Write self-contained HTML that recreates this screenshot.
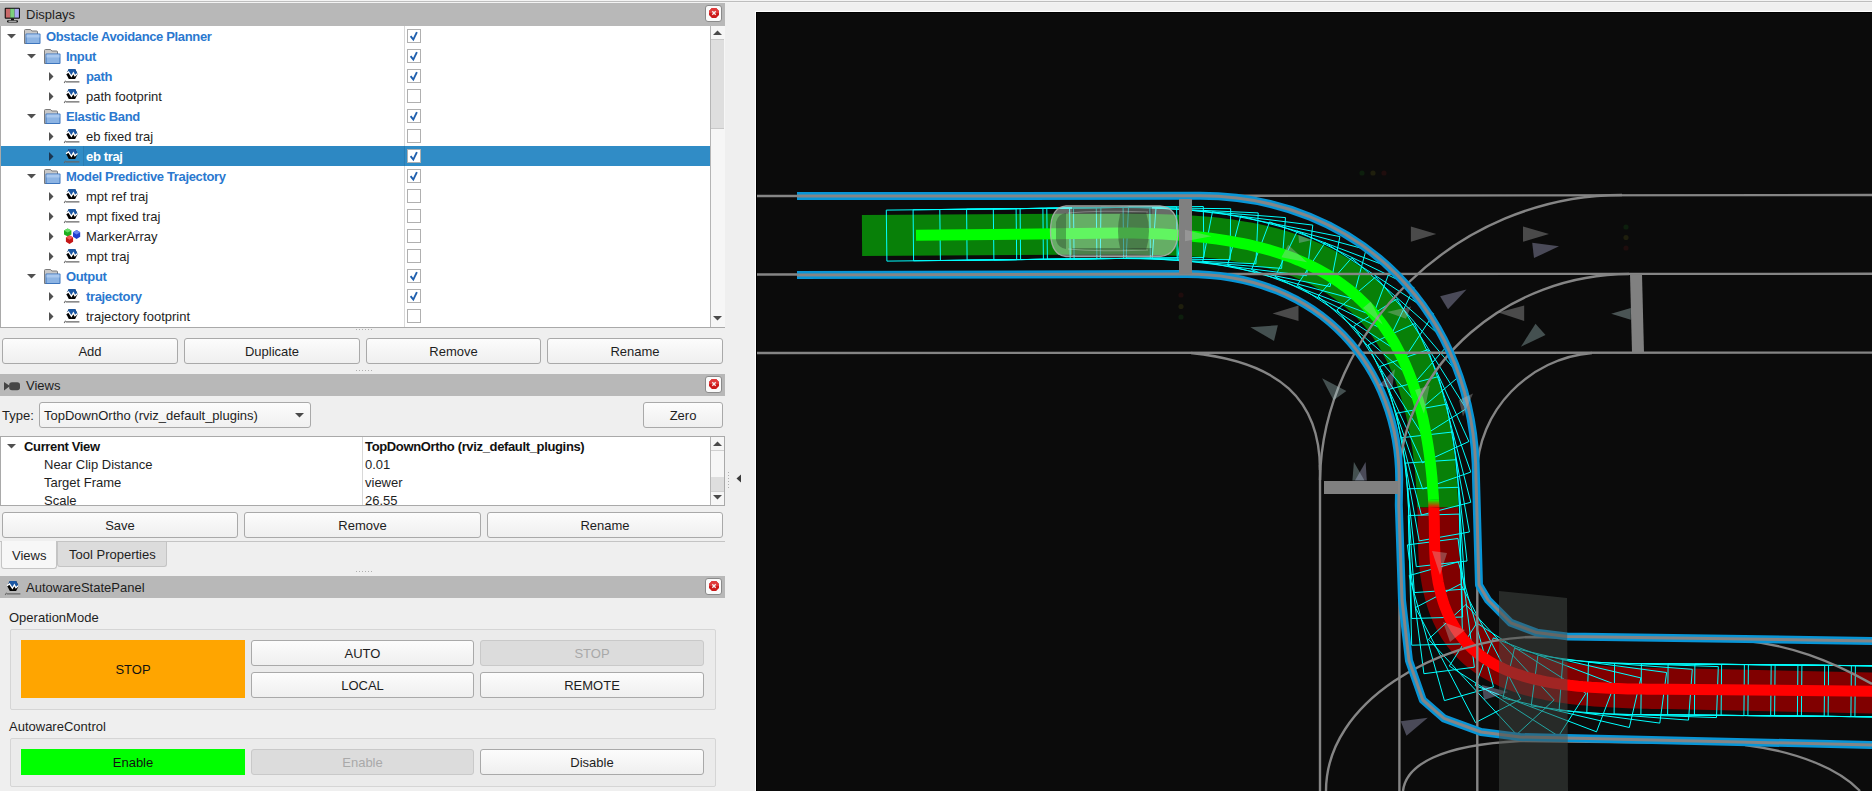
<!DOCTYPE html><html><head><meta charset="utf-8"><style>html,body{margin:0;padding:0;}body{width:1872px;height:791px;overflow:hidden;position:relative;background:#efefef;font-family:"Liberation Sans", sans-serif;}</style></head><body>
<div style="position:absolute;left:0px;top:0px;width:1872px;height:3px;background:#f3f3f3;"></div>
<div style="position:absolute;left:0px;top:1px;width:1872px;height:1px;background:#bdbdbd;"></div>
<div style="position:absolute;left:0px;top:3px;width:725px;height:23px;background:#b8b8b8;"></div>
<div style="position:absolute;left:26px;top:4.50px;font-size:13px;line-height:20px;font-weight:normal;color:#1e1e1e;white-space:nowrap;">Displays</div>
<div style="position:absolute;left:705px;top:5px;width:17px;height:17px;box-sizing:border-box;border:1px solid #8a8a8a;border-radius:3px;background:#fafafa;"></div>
<svg style="position:absolute;left:709px;top:8px" width="10" height="10" viewBox="0 0 10 10"><polygon points="2.9,0 7.1,0 10,2.9 10,7.1 7.1,10 2.9,10 0,7.1 0,2.9" fill="#cc1a1a"/><polygon points="2.9,0 7.1,0 10,2.9 10,5 0,5 0,2.9" fill="#e03a3a"/><path d="M3.3 3.3 L6.7 6.7 M6.7 3.3 L3.3 6.7" stroke="#f4f4f4" stroke-width="1.3"/></svg>
<svg style="position:absolute;left:4px;top:7px" width="17" height="16" viewBox="0 0 17 16"><rect x="0.7" y="0.7" width="15.3" height="11" rx="1" fill="#111"/><rect x="1.8" y="1.8" width="4.4" height="8.8" fill="#c86a6a"/><rect x="6.2" y="1.8" width="4.4" height="8.8" fill="#7ccf7c"/><rect x="10.6" y="1.8" width="4.3" height="8.8" fill="#a8a8f0"/><rect x="7" y="11.5" width="3" height="2" fill="#111"/><rect x="3" y="13.2" width="11" height="2.2" rx="1" fill="#111"/><rect x="4.5" y="13.8" width="8" height="0.9" fill="#ddd"/></svg>
<div style="position:absolute;left:0px;top:26px;width:725px;height:302px;background:#fff;box-sizing:border-box;border:1px solid #a9a9a9;border-top:none;"></div>
<div style="position:absolute;left:404px;top:26px;width:1px;height:301px;background:#d8d8d8;"></div>
<div style="position:absolute;left:1px;top:146px;width:709px;height:20px;background:#308cc6;"></div>
<div style="position:absolute;left:84px;top:146px;width:320px;height:20px;background:#2d88c3;"></div>
<div style="position:absolute;left:83px;top:146px;width:1px;height:20px;background:#2a7db3;"></div>
<div style="position:absolute;left:404px;top:146px;width:1px;height:20px;background:#2a7db3;"></div>
<svg style="position:absolute;left:7px;top:34px" width="9" height="5" viewBox="0 0 9 5"><polygon points="0,0 9,0 4.5,4.5" fill="#505050"/></svg>
<svg style="position:absolute;left:24px;top:29px" width="17" height="16" viewBox="0 0 17 16"><path d="M0.5 1.5 Q0.5 0.5 1.5 0.5 L6.5 0.5 L7.8 2 L12.5 2 Q13.5 2 13.5 3 L13.5 14.5 L0.5 14.5 Z" fill="#c8c8c8" stroke="#7a7a7a" stroke-width="1"/><rect x="1.5" y="4.5" width="15" height="10.5" rx="1" fill="#3d75bd"/><rect x="2.5" y="5.5" width="13" height="8.5" fill="#8db4e3"/><rect x="2.5" y="5.5" width="13" height="3" fill="#a9c8ee"/></svg>
<div style="position:absolute;left:46px;top:26.50px;font-size:13px;line-height:20px;font-weight:bold;color:#2a78cf;white-space:nowrap;letter-spacing:-0.35px;">Obstacle Avoidance Planner</div>
<div style="position:absolute;left:407px;top:29px;width:14px;height:14px;box-sizing:border-box;border:1px solid #b0b0b0;background:#fff;"></div>
<svg style="position:absolute;left:407px;top:29px" width="14" height="14" viewBox="0 0 14 14"><path d="M3.6 7.2 L6.3 10.6 L9.9 3.2" stroke="#1f5fae" stroke-width="1.9" fill="none"/></svg>
<svg style="position:absolute;left:27px;top:54px" width="9" height="5" viewBox="0 0 9 5"><polygon points="0,0 9,0 4.5,4.5" fill="#505050"/></svg>
<svg style="position:absolute;left:44px;top:49px" width="17" height="16" viewBox="0 0 17 16"><path d="M0.5 1.5 Q0.5 0.5 1.5 0.5 L6.5 0.5 L7.8 2 L12.5 2 Q13.5 2 13.5 3 L13.5 14.5 L0.5 14.5 Z" fill="#c8c8c8" stroke="#7a7a7a" stroke-width="1"/><rect x="1.5" y="4.5" width="15" height="10.5" rx="1" fill="#3d75bd"/><rect x="2.5" y="5.5" width="13" height="8.5" fill="#8db4e3"/><rect x="2.5" y="5.5" width="13" height="3" fill="#a9c8ee"/></svg>
<div style="position:absolute;left:66px;top:46.50px;font-size:13px;line-height:20px;font-weight:bold;color:#2a78cf;white-space:nowrap;letter-spacing:-0.35px;">Input</div>
<div style="position:absolute;left:407px;top:49px;width:14px;height:14px;box-sizing:border-box;border:1px solid #b0b0b0;background:#fff;"></div>
<svg style="position:absolute;left:407px;top:49px" width="14" height="14" viewBox="0 0 14 14"><path d="M3.6 7.2 L6.3 10.6 L9.9 3.2" stroke="#1f5fae" stroke-width="1.9" fill="none"/></svg>
<svg style="position:absolute;left:49px;top:72px" width="5" height="9" viewBox="0 0 5 9"><polygon points="0,0 4.5,4.5 0,9" fill="#505050"/></svg>
<svg style="position:absolute;left:63px;top:68px" width="17" height="17" viewBox="0 0 17 17"><polygon points="5.8,1 12.1,1 14.7,6 12.1,11.1 5.8,11.1 3.2,6" fill="#050505"/><path d="M5.8,1 L12.1,1 L14.7,6 L11.9,7.6 L10.4,4.8 L8.4,8.2 L5.5,3.8 L3.3,5.3 L3.2,6 Z" fill="#1b57a3"/><path d="M3.0 5.6 L5.5 3.9 L8.4 8.3 L10.4 4.9 L11.9 7.7 L14.6 5.6" stroke="#fff" stroke-width="1.3" fill="none" stroke-linejoin="miter"/><path d="M1.2 15 L2.6 12.8 M3 13.9 L16.4 13.9" stroke="#666" stroke-width="1.1" fill="none"/></svg>
<div style="position:absolute;left:86px;top:66.50px;font-size:13px;line-height:20px;font-weight:bold;color:#2a78cf;white-space:nowrap;letter-spacing:-0.35px;">path</div>
<div style="position:absolute;left:407px;top:69px;width:14px;height:14px;box-sizing:border-box;border:1px solid #b0b0b0;background:#fff;"></div>
<svg style="position:absolute;left:407px;top:69px" width="14" height="14" viewBox="0 0 14 14"><path d="M3.6 7.2 L6.3 10.6 L9.9 3.2" stroke="#1f5fae" stroke-width="1.9" fill="none"/></svg>
<svg style="position:absolute;left:49px;top:92px" width="5" height="9" viewBox="0 0 5 9"><polygon points="0,0 4.5,4.5 0,9" fill="#505050"/></svg>
<svg style="position:absolute;left:63px;top:88px" width="17" height="17" viewBox="0 0 17 17"><polygon points="5.8,1 12.1,1 14.7,6 12.1,11.1 5.8,11.1 3.2,6" fill="#050505"/><path d="M5.8,1 L12.1,1 L14.7,6 L11.9,7.6 L10.4,4.8 L8.4,8.2 L5.5,3.8 L3.3,5.3 L3.2,6 Z" fill="#1b57a3"/><path d="M3.0 5.6 L5.5 3.9 L8.4 8.3 L10.4 4.9 L11.9 7.7 L14.6 5.6" stroke="#fff" stroke-width="1.3" fill="none" stroke-linejoin="miter"/><path d="M1.2 15 L2.6 12.8 M3 13.9 L16.4 13.9" stroke="#666" stroke-width="1.1" fill="none"/></svg>
<div style="position:absolute;left:86px;top:86.50px;font-size:13px;line-height:20px;font-weight:normal;color:#1e1e1e;white-space:nowrap;">path footprint</div>
<div style="position:absolute;left:407px;top:89px;width:14px;height:14px;box-sizing:border-box;border:1px solid #b0b0b0;background:#fff;"></div>
<svg style="position:absolute;left:27px;top:114px" width="9" height="5" viewBox="0 0 9 5"><polygon points="0,0 9,0 4.5,4.5" fill="#505050"/></svg>
<svg style="position:absolute;left:44px;top:109px" width="17" height="16" viewBox="0 0 17 16"><path d="M0.5 1.5 Q0.5 0.5 1.5 0.5 L6.5 0.5 L7.8 2 L12.5 2 Q13.5 2 13.5 3 L13.5 14.5 L0.5 14.5 Z" fill="#c8c8c8" stroke="#7a7a7a" stroke-width="1"/><rect x="1.5" y="4.5" width="15" height="10.5" rx="1" fill="#3d75bd"/><rect x="2.5" y="5.5" width="13" height="8.5" fill="#8db4e3"/><rect x="2.5" y="5.5" width="13" height="3" fill="#a9c8ee"/></svg>
<div style="position:absolute;left:66px;top:106.50px;font-size:13px;line-height:20px;font-weight:bold;color:#2a78cf;white-space:nowrap;letter-spacing:-0.35px;">Elastic Band</div>
<div style="position:absolute;left:407px;top:109px;width:14px;height:14px;box-sizing:border-box;border:1px solid #b0b0b0;background:#fff;"></div>
<svg style="position:absolute;left:407px;top:109px" width="14" height="14" viewBox="0 0 14 14"><path d="M3.6 7.2 L6.3 10.6 L9.9 3.2" stroke="#1f5fae" stroke-width="1.9" fill="none"/></svg>
<svg style="position:absolute;left:49px;top:132px" width="5" height="9" viewBox="0 0 5 9"><polygon points="0,0 4.5,4.5 0,9" fill="#505050"/></svg>
<svg style="position:absolute;left:63px;top:128px" width="17" height="17" viewBox="0 0 17 17"><polygon points="5.8,1 12.1,1 14.7,6 12.1,11.1 5.8,11.1 3.2,6" fill="#050505"/><path d="M5.8,1 L12.1,1 L14.7,6 L11.9,7.6 L10.4,4.8 L8.4,8.2 L5.5,3.8 L3.3,5.3 L3.2,6 Z" fill="#1b57a3"/><path d="M3.0 5.6 L5.5 3.9 L8.4 8.3 L10.4 4.9 L11.9 7.7 L14.6 5.6" stroke="#fff" stroke-width="1.3" fill="none" stroke-linejoin="miter"/><path d="M1.2 15 L2.6 12.8 M3 13.9 L16.4 13.9" stroke="#666" stroke-width="1.1" fill="none"/></svg>
<div style="position:absolute;left:86px;top:126.50px;font-size:13px;line-height:20px;font-weight:normal;color:#1e1e1e;white-space:nowrap;">eb fixed traj</div>
<div style="position:absolute;left:407px;top:129px;width:14px;height:14px;box-sizing:border-box;border:1px solid #b0b0b0;background:#fff;"></div>
<svg style="position:absolute;left:49px;top:152px" width="5" height="9" viewBox="0 0 5 9"><polygon points="0,0 4.5,4.5 0,9" fill="#1a3550"/></svg>
<svg style="position:absolute;left:63px;top:148px" width="17" height="17" viewBox="0 0 17 17"><polygon points="5.8,1 12.1,1 14.7,6 12.1,11.1 5.8,11.1 3.2,6" fill="#050505"/><path d="M5.8,1 L12.1,1 L14.7,6 L11.9,7.6 L10.4,4.8 L8.4,8.2 L5.5,3.8 L3.3,5.3 L3.2,6 Z" fill="#1b57a3"/><path d="M3.0 5.6 L5.5 3.9 L8.4 8.3 L10.4 4.9 L11.9 7.7 L14.6 5.6" stroke="#fff" stroke-width="1.3" fill="none" stroke-linejoin="miter"/><path d="M1.2 15 L2.6 12.8 M3 13.9 L16.4 13.9" stroke="#666" stroke-width="1.1" fill="none"/></svg>
<div style="position:absolute;left:86px;top:146.50px;font-size:13px;line-height:20px;font-weight:bold;color:#ffffff;white-space:nowrap;letter-spacing:-0.35px;">eb traj</div>
<div style="position:absolute;left:407px;top:149px;width:14px;height:14px;box-sizing:border-box;border:1px solid #b0b0b0;background:#fff;"></div>
<svg style="position:absolute;left:407px;top:149px" width="14" height="14" viewBox="0 0 14 14"><path d="M3.6 7.2 L6.3 10.6 L9.9 3.2" stroke="#1f5fae" stroke-width="1.9" fill="none"/></svg>
<svg style="position:absolute;left:27px;top:174px" width="9" height="5" viewBox="0 0 9 5"><polygon points="0,0 9,0 4.5,4.5" fill="#505050"/></svg>
<svg style="position:absolute;left:44px;top:169px" width="17" height="16" viewBox="0 0 17 16"><path d="M0.5 1.5 Q0.5 0.5 1.5 0.5 L6.5 0.5 L7.8 2 L12.5 2 Q13.5 2 13.5 3 L13.5 14.5 L0.5 14.5 Z" fill="#c8c8c8" stroke="#7a7a7a" stroke-width="1"/><rect x="1.5" y="4.5" width="15" height="10.5" rx="1" fill="#3d75bd"/><rect x="2.5" y="5.5" width="13" height="8.5" fill="#8db4e3"/><rect x="2.5" y="5.5" width="13" height="3" fill="#a9c8ee"/></svg>
<div style="position:absolute;left:66px;top:166.50px;font-size:13px;line-height:20px;font-weight:bold;color:#2a78cf;white-space:nowrap;letter-spacing:-0.35px;">Model Predictive Trajectory</div>
<div style="position:absolute;left:407px;top:169px;width:14px;height:14px;box-sizing:border-box;border:1px solid #b0b0b0;background:#fff;"></div>
<svg style="position:absolute;left:407px;top:169px" width="14" height="14" viewBox="0 0 14 14"><path d="M3.6 7.2 L6.3 10.6 L9.9 3.2" stroke="#1f5fae" stroke-width="1.9" fill="none"/></svg>
<svg style="position:absolute;left:49px;top:192px" width="5" height="9" viewBox="0 0 5 9"><polygon points="0,0 4.5,4.5 0,9" fill="#505050"/></svg>
<svg style="position:absolute;left:63px;top:188px" width="17" height="17" viewBox="0 0 17 17"><polygon points="5.8,1 12.1,1 14.7,6 12.1,11.1 5.8,11.1 3.2,6" fill="#050505"/><path d="M5.8,1 L12.1,1 L14.7,6 L11.9,7.6 L10.4,4.8 L8.4,8.2 L5.5,3.8 L3.3,5.3 L3.2,6 Z" fill="#1b57a3"/><path d="M3.0 5.6 L5.5 3.9 L8.4 8.3 L10.4 4.9 L11.9 7.7 L14.6 5.6" stroke="#fff" stroke-width="1.3" fill="none" stroke-linejoin="miter"/><path d="M1.2 15 L2.6 12.8 M3 13.9 L16.4 13.9" stroke="#666" stroke-width="1.1" fill="none"/></svg>
<div style="position:absolute;left:86px;top:186.50px;font-size:13px;line-height:20px;font-weight:normal;color:#1e1e1e;white-space:nowrap;">mpt ref traj</div>
<div style="position:absolute;left:407px;top:189px;width:14px;height:14px;box-sizing:border-box;border:1px solid #b0b0b0;background:#fff;"></div>
<svg style="position:absolute;left:49px;top:212px" width="5" height="9" viewBox="0 0 5 9"><polygon points="0,0 4.5,4.5 0,9" fill="#505050"/></svg>
<svg style="position:absolute;left:63px;top:208px" width="17" height="17" viewBox="0 0 17 17"><polygon points="5.8,1 12.1,1 14.7,6 12.1,11.1 5.8,11.1 3.2,6" fill="#050505"/><path d="M5.8,1 L12.1,1 L14.7,6 L11.9,7.6 L10.4,4.8 L8.4,8.2 L5.5,3.8 L3.3,5.3 L3.2,6 Z" fill="#1b57a3"/><path d="M3.0 5.6 L5.5 3.9 L8.4 8.3 L10.4 4.9 L11.9 7.7 L14.6 5.6" stroke="#fff" stroke-width="1.3" fill="none" stroke-linejoin="miter"/><path d="M1.2 15 L2.6 12.8 M3 13.9 L16.4 13.9" stroke="#666" stroke-width="1.1" fill="none"/></svg>
<div style="position:absolute;left:86px;top:206.50px;font-size:13px;line-height:20px;font-weight:normal;color:#1e1e1e;white-space:nowrap;">mpt fixed traj</div>
<div style="position:absolute;left:407px;top:209px;width:14px;height:14px;box-sizing:border-box;border:1px solid #b0b0b0;background:#fff;"></div>
<svg style="position:absolute;left:49px;top:232px" width="5" height="9" viewBox="0 0 5 9"><polygon points="0,0 4.5,4.5 0,9" fill="#505050"/></svg>
<svg style="position:absolute;left:63px;top:228px" width="18" height="17" viewBox="0 0 18 17"><polygon points="4.7,0.4 8.4,2.4 8.4,6.4 4.7,8.4 1.0,6.4 1.0,2.4" fill="#1fae1f"/><polygon points="4.7,0.4 8.4,2.4 4.7,4.4 1.0,2.4" fill="#66e066"/><polygon points="13.6,2 17.2,4.275 17.2,8.825 13.6,11.1 10.0,8.825 10.0,4.275" fill="#1f3fd0"/><polygon points="13.6,2 17.2,4.275 13.6,6.55 10.0,4.275" fill="#6a86f0"/><polygon points="6.5,7.3 10.1,9.475 10.1,13.825 6.5,16.0 2.9,13.825 2.9,9.475" fill="#c41616"/><polygon points="6.5,7.3 10.1,9.475 6.5,11.649999999999999 2.9,9.475" fill="#ef5656"/></svg>
<div style="position:absolute;left:86px;top:226.50px;font-size:13px;line-height:20px;font-weight:normal;color:#1e1e1e;white-space:nowrap;">MarkerArray</div>
<div style="position:absolute;left:407px;top:229px;width:14px;height:14px;box-sizing:border-box;border:1px solid #b0b0b0;background:#fff;"></div>
<svg style="position:absolute;left:49px;top:252px" width="5" height="9" viewBox="0 0 5 9"><polygon points="0,0 4.5,4.5 0,9" fill="#505050"/></svg>
<svg style="position:absolute;left:63px;top:248px" width="17" height="17" viewBox="0 0 17 17"><polygon points="5.8,1 12.1,1 14.7,6 12.1,11.1 5.8,11.1 3.2,6" fill="#050505"/><path d="M5.8,1 L12.1,1 L14.7,6 L11.9,7.6 L10.4,4.8 L8.4,8.2 L5.5,3.8 L3.3,5.3 L3.2,6 Z" fill="#1b57a3"/><path d="M3.0 5.6 L5.5 3.9 L8.4 8.3 L10.4 4.9 L11.9 7.7 L14.6 5.6" stroke="#fff" stroke-width="1.3" fill="none" stroke-linejoin="miter"/><path d="M1.2 15 L2.6 12.8 M3 13.9 L16.4 13.9" stroke="#666" stroke-width="1.1" fill="none"/></svg>
<div style="position:absolute;left:86px;top:246.50px;font-size:13px;line-height:20px;font-weight:normal;color:#1e1e1e;white-space:nowrap;">mpt traj</div>
<div style="position:absolute;left:407px;top:249px;width:14px;height:14px;box-sizing:border-box;border:1px solid #b0b0b0;background:#fff;"></div>
<svg style="position:absolute;left:27px;top:274px" width="9" height="5" viewBox="0 0 9 5"><polygon points="0,0 9,0 4.5,4.5" fill="#505050"/></svg>
<svg style="position:absolute;left:44px;top:269px" width="17" height="16" viewBox="0 0 17 16"><path d="M0.5 1.5 Q0.5 0.5 1.5 0.5 L6.5 0.5 L7.8 2 L12.5 2 Q13.5 2 13.5 3 L13.5 14.5 L0.5 14.5 Z" fill="#c8c8c8" stroke="#7a7a7a" stroke-width="1"/><rect x="1.5" y="4.5" width="15" height="10.5" rx="1" fill="#3d75bd"/><rect x="2.5" y="5.5" width="13" height="8.5" fill="#8db4e3"/><rect x="2.5" y="5.5" width="13" height="3" fill="#a9c8ee"/></svg>
<div style="position:absolute;left:66px;top:266.50px;font-size:13px;line-height:20px;font-weight:bold;color:#2a78cf;white-space:nowrap;letter-spacing:-0.35px;">Output</div>
<div style="position:absolute;left:407px;top:269px;width:14px;height:14px;box-sizing:border-box;border:1px solid #b0b0b0;background:#fff;"></div>
<svg style="position:absolute;left:407px;top:269px" width="14" height="14" viewBox="0 0 14 14"><path d="M3.6 7.2 L6.3 10.6 L9.9 3.2" stroke="#1f5fae" stroke-width="1.9" fill="none"/></svg>
<svg style="position:absolute;left:49px;top:292px" width="5" height="9" viewBox="0 0 5 9"><polygon points="0,0 4.5,4.5 0,9" fill="#505050"/></svg>
<svg style="position:absolute;left:63px;top:288px" width="17" height="17" viewBox="0 0 17 17"><polygon points="5.8,1 12.1,1 14.7,6 12.1,11.1 5.8,11.1 3.2,6" fill="#050505"/><path d="M5.8,1 L12.1,1 L14.7,6 L11.9,7.6 L10.4,4.8 L8.4,8.2 L5.5,3.8 L3.3,5.3 L3.2,6 Z" fill="#1b57a3"/><path d="M3.0 5.6 L5.5 3.9 L8.4 8.3 L10.4 4.9 L11.9 7.7 L14.6 5.6" stroke="#fff" stroke-width="1.3" fill="none" stroke-linejoin="miter"/><path d="M1.2 15 L2.6 12.8 M3 13.9 L16.4 13.9" stroke="#666" stroke-width="1.1" fill="none"/></svg>
<div style="position:absolute;left:86px;top:286.50px;font-size:13px;line-height:20px;font-weight:bold;color:#2a78cf;white-space:nowrap;letter-spacing:-0.35px;">trajectory</div>
<div style="position:absolute;left:407px;top:289px;width:14px;height:14px;box-sizing:border-box;border:1px solid #b0b0b0;background:#fff;"></div>
<svg style="position:absolute;left:407px;top:289px" width="14" height="14" viewBox="0 0 14 14"><path d="M3.6 7.2 L6.3 10.6 L9.9 3.2" stroke="#1f5fae" stroke-width="1.9" fill="none"/></svg>
<svg style="position:absolute;left:49px;top:312px" width="5" height="9" viewBox="0 0 5 9"><polygon points="0,0 4.5,4.5 0,9" fill="#505050"/></svg>
<svg style="position:absolute;left:63px;top:308px" width="17" height="17" viewBox="0 0 17 17"><polygon points="5.8,1 12.1,1 14.7,6 12.1,11.1 5.8,11.1 3.2,6" fill="#050505"/><path d="M5.8,1 L12.1,1 L14.7,6 L11.9,7.6 L10.4,4.8 L8.4,8.2 L5.5,3.8 L3.3,5.3 L3.2,6 Z" fill="#1b57a3"/><path d="M3.0 5.6 L5.5 3.9 L8.4 8.3 L10.4 4.9 L11.9 7.7 L14.6 5.6" stroke="#fff" stroke-width="1.3" fill="none" stroke-linejoin="miter"/><path d="M1.2 15 L2.6 12.8 M3 13.9 L16.4 13.9" stroke="#666" stroke-width="1.1" fill="none"/></svg>
<div style="position:absolute;left:86px;top:306.50px;font-size:13px;line-height:20px;font-weight:normal;color:#1e1e1e;white-space:nowrap;">trajectory footprint</div>
<div style="position:absolute;left:407px;top:309px;width:14px;height:14px;box-sizing:border-box;border:1px solid #b0b0b0;background:#fff;"></div>
<div style="position:absolute;left:710px;top:26px;width:15px;height:301px;background:#f6f6f6;box-sizing:border-box;border-left:1px solid #b5b5b5;"></div>
<div style="position:absolute;left:711px;top:39px;width:13px;height:88px;background:#dedede;border-top:1px solid #c8c8c8;border-bottom:1px solid #c8c8c8;"></div>
<svg style="position:absolute;left:713px;top:30px" width="9" height="5"><polygon points="0,5 4.5,0.5 9,5" fill="#4a4a4a"/></svg>
<svg style="position:absolute;left:713px;top:316px" width="9" height="5"><polygon points="0,0 9,0 4.5,4.5" fill="#4a4a4a"/></svg>
<div style="position:absolute;left:356px;top:329px;width:1px;height:1px;background:#b0b0b0;"></div>
<div style="position:absolute;left:359px;top:329px;width:1px;height:1px;background:#b0b0b0;"></div>
<div style="position:absolute;left:362px;top:329px;width:1px;height:1px;background:#b0b0b0;"></div>
<div style="position:absolute;left:365px;top:329px;width:1px;height:1px;background:#b0b0b0;"></div>
<div style="position:absolute;left:368px;top:329px;width:1px;height:1px;background:#b0b0b0;"></div>
<div style="position:absolute;left:371px;top:329px;width:1px;height:1px;background:#b0b0b0;"></div>
<div style="position:absolute;left:356px;top:370px;width:1px;height:1px;background:#b0b0b0;"></div>
<div style="position:absolute;left:359px;top:370px;width:1px;height:1px;background:#b0b0b0;"></div>
<div style="position:absolute;left:362px;top:370px;width:1px;height:1px;background:#b0b0b0;"></div>
<div style="position:absolute;left:365px;top:370px;width:1px;height:1px;background:#b0b0b0;"></div>
<div style="position:absolute;left:368px;top:370px;width:1px;height:1px;background:#b0b0b0;"></div>
<div style="position:absolute;left:371px;top:370px;width:1px;height:1px;background:#b0b0b0;"></div>
<div style="position:absolute;left:356px;top:571px;width:1px;height:1px;background:#b0b0b0;"></div>
<div style="position:absolute;left:359px;top:571px;width:1px;height:1px;background:#b0b0b0;"></div>
<div style="position:absolute;left:362px;top:571px;width:1px;height:1px;background:#b0b0b0;"></div>
<div style="position:absolute;left:365px;top:571px;width:1px;height:1px;background:#b0b0b0;"></div>
<div style="position:absolute;left:368px;top:571px;width:1px;height:1px;background:#b0b0b0;"></div>
<div style="position:absolute;left:371px;top:571px;width:1px;height:1px;background:#b0b0b0;"></div>
<div style="position:absolute;left:2px;top:338px;width:176px;height:26px;background:linear-gradient(#fcfcfc,#efefef);border:1px solid #a9a9a9;border-radius:3px;box-sizing:border-box;"></div>
<div style="position:absolute;left:2px;top:341.50px;width:176px;text-align:center;font-size:13px;line-height:20px;font-weight:normal;color:#1e1e1e;white-space:nowrap;">Add</div>
<div style="position:absolute;left:184px;top:338px;width:176px;height:26px;background:linear-gradient(#fcfcfc,#efefef);border:1px solid #a9a9a9;border-radius:3px;box-sizing:border-box;"></div>
<div style="position:absolute;left:184px;top:341.50px;width:176px;text-align:center;font-size:13px;line-height:20px;font-weight:normal;color:#1e1e1e;white-space:nowrap;">Duplicate</div>
<div style="position:absolute;left:366px;top:338px;width:175px;height:26px;background:linear-gradient(#fcfcfc,#efefef);border:1px solid #a9a9a9;border-radius:3px;box-sizing:border-box;"></div>
<div style="position:absolute;left:366px;top:341.50px;width:175px;text-align:center;font-size:13px;line-height:20px;font-weight:normal;color:#1e1e1e;white-space:nowrap;">Remove</div>
<div style="position:absolute;left:547px;top:338px;width:176px;height:26px;background:linear-gradient(#fcfcfc,#efefef);border:1px solid #a9a9a9;border-radius:3px;box-sizing:border-box;"></div>
<div style="position:absolute;left:547px;top:341.50px;width:176px;text-align:center;font-size:13px;line-height:20px;font-weight:normal;color:#1e1e1e;white-space:nowrap;">Rename</div>
<div style="position:absolute;left:0px;top:374px;width:725px;height:22px;background:#b8b8b8;"></div>
<div style="position:absolute;left:26px;top:375.50px;font-size:13px;line-height:20px;font-weight:normal;color:#1e1e1e;white-space:nowrap;">Views</div>
<div style="position:absolute;left:705px;top:376px;width:17px;height:17px;box-sizing:border-box;border:1px solid #8a8a8a;border-radius:3px;background:#fafafa;"></div>
<svg style="position:absolute;left:709px;top:379px" width="10" height="10" viewBox="0 0 10 10"><polygon points="2.9,0 7.1,0 10,2.9 10,7.1 7.1,10 2.9,10 0,7.1 0,2.9" fill="#cc1a1a"/><polygon points="2.9,0 7.1,0 10,2.9 10,5 0,5 0,2.9" fill="#e03a3a"/><path d="M3.3 3.3 L6.7 6.7 M6.7 3.3 L3.3 6.7" stroke="#f4f4f4" stroke-width="1.3"/></svg>
<svg style="position:absolute;left:4px;top:381px" width="17" height="10" viewBox="0 0 17 10"><polygon points="0,1 6,5 0,9.5" fill="#464646"/><rect x="5.2" y="1.3" width="10.8" height="8" rx="2.8" fill="#464646"/></svg>
<div style="position:absolute;left:2px;top:405.50px;font-size:13px;line-height:20px;font-weight:normal;color:#1e1e1e;white-space:nowrap;">Type:</div>
<div style="position:absolute;left:39px;top:402px;width:272px;height:26px;background:linear-gradient(#fcfcfc,#f0f0f0);border:1px solid #a9a9a9;border-radius:3px;box-sizing:border-box;"></div>
<div style="position:absolute;left:44px;top:405.50px;font-size:13px;line-height:20px;font-weight:normal;color:#1e1e1e;white-space:nowrap;">TopDownOrtho (rviz_default_plugins)</div>
<svg style="position:absolute;left:295px;top:413px" width="9" height="5"><polygon points="0,0 9,0 4.5,4.5" fill="#4a4a4a"/></svg>
<div style="position:absolute;left:643px;top:402px;width:80px;height:26px;background:linear-gradient(#fcfcfc,#efefef);border:1px solid #a9a9a9;border-radius:3px;box-sizing:border-box;"></div>
<div style="position:absolute;left:643px;top:405.50px;width:80px;text-align:center;font-size:13px;line-height:20px;font-weight:normal;color:#1e1e1e;white-space:nowrap;">Zero</div>
<div style="position:absolute;left:0px;top:436px;width:725px;height:70px;background:#fff;box-sizing:border-box;border:1px solid #a9a9a9;"></div>
<div style="position:absolute;left:362px;top:437px;width:1px;height:68px;background:#d8d8d8;"></div>
<svg style="position:absolute;left:7px;top:444px" width="9" height="5" viewBox="0 0 9 5"><polygon points="0,0 9,0 4.5,4.5" fill="#505050"/></svg>
<div style="position:absolute;left:24px;top:436.50px;font-size:13px;line-height:20px;font-weight:bold;color:#111;white-space:nowrap;letter-spacing:-0.35px;">Current View</div>
<div style="position:absolute;left:365px;top:436.50px;font-size:13px;line-height:20px;font-weight:bold;color:#111;white-space:nowrap;letter-spacing:-0.35px;">TopDownOrtho (rviz_default_plugins)</div>
<div style="position:absolute;left:44px;top:454.50px;font-size:13px;line-height:20px;font-weight:normal;color:#1e1e1e;white-space:nowrap;">Near Clip Distance</div>
<div style="position:absolute;left:365px;top:454.50px;font-size:13px;line-height:20px;font-weight:normal;color:#1e1e1e;white-space:nowrap;">0.01</div>
<div style="position:absolute;left:44px;top:472.50px;font-size:13px;line-height:20px;font-weight:normal;color:#1e1e1e;white-space:nowrap;">Target Frame</div>
<div style="position:absolute;left:365px;top:472.50px;font-size:13px;line-height:20px;font-weight:normal;color:#1e1e1e;white-space:nowrap;">viewer</div>
<div style="position:absolute;left:0;top:437px;width:710px;height:68px;overflow:hidden;">
<div style="position:absolute;left:44px;top:53.50px;font-size:13px;line-height:20px;color:#1e1e1e;white-space:nowrap">Scale</div>
<div style="position:absolute;left:365px;top:53.50px;font-size:13px;line-height:20px;color:#1e1e1e;white-space:nowrap">26.55</div>
</div>
<div style="position:absolute;left:710px;top:437px;width:14px;height:68px;background:#f6f6f6;box-sizing:border-box;border-left:1px solid #b5b5b5;"></div>
<div style="position:absolute;left:711px;top:450px;width:13px;height:1px;background:#d0d0d0;"></div>
<div style="position:absolute;left:711px;top:477px;width:13px;height:14px;background:#dedede;"></div>
<div style="position:absolute;left:711px;top:491px;width:13px;height:1px;background:#d0d0d0;"></div>
<svg style="position:absolute;left:713px;top:441px" width="9" height="5"><polygon points="0,5 4.5,0.5 9,5" fill="#4a4a4a"/></svg>
<svg style="position:absolute;left:713px;top:495px" width="9" height="5"><polygon points="0,0 9,0 4.5,4.5" fill="#4a4a4a"/></svg>
<div style="position:absolute;left:2px;top:512px;width:236px;height:26px;background:linear-gradient(#fcfcfc,#efefef);border:1px solid #a9a9a9;border-radius:3px;box-sizing:border-box;"></div>
<div style="position:absolute;left:2px;top:515.50px;width:236px;text-align:center;font-size:13px;line-height:20px;font-weight:normal;color:#1e1e1e;white-space:nowrap;">Save</div>
<div style="position:absolute;left:244px;top:512px;width:237px;height:26px;background:linear-gradient(#fcfcfc,#efefef);border:1px solid #a9a9a9;border-radius:3px;box-sizing:border-box;"></div>
<div style="position:absolute;left:244px;top:515.50px;width:237px;text-align:center;font-size:13px;line-height:20px;font-weight:normal;color:#1e1e1e;white-space:nowrap;">Remove</div>
<div style="position:absolute;left:487px;top:512px;width:236px;height:26px;background:linear-gradient(#fcfcfc,#efefef);border:1px solid #a9a9a9;border-radius:3px;box-sizing:border-box;"></div>
<div style="position:absolute;left:487px;top:515.50px;width:236px;text-align:center;font-size:13px;line-height:20px;font-weight:normal;color:#1e1e1e;white-space:nowrap;">Rename</div>
<div style="position:absolute;left:0px;top:541px;width:725px;height:1px;background:#c4c4c4;"></div>
<div style="position:absolute;left:57px;top:542px;width:110px;height:25px;background:#dcdcdc;box-sizing:border-box;border:1px solid #c4c4c4;border-top:none;border-radius:0 0 3px 3px;"></div>
<div style="position:absolute;left:1px;top:541px;width:56px;height:28px;background:#f7f7f7;box-sizing:border-box;border:1px solid #c4c4c4;border-top:none;border-radius:0 0 3px 3px;"></div>
<div style="position:absolute;left:12px;top:545.50px;font-size:13px;line-height:20px;font-weight:normal;color:#1e1e1e;white-space:nowrap;">Views</div>
<div style="position:absolute;left:69px;top:544.50px;font-size:13px;line-height:20px;font-weight:normal;color:#1e1e1e;white-space:nowrap;">Tool Properties</div>
<div style="position:absolute;left:0px;top:576px;width:725px;height:22px;background:#b8b8b8;"></div>
<div style="position:absolute;left:26px;top:577.50px;font-size:13px;line-height:20px;font-weight:normal;color:#1e1e1e;white-space:nowrap;">AutowareStatePanel</div>
<div style="position:absolute;left:705px;top:578px;width:17px;height:17px;box-sizing:border-box;border:1px solid #8a8a8a;border-radius:3px;background:#fafafa;"></div>
<svg style="position:absolute;left:709px;top:581px" width="10" height="10" viewBox="0 0 10 10"><polygon points="2.9,0 7.1,0 10,2.9 10,7.1 7.1,10 2.9,10 0,7.1 0,2.9" fill="#cc1a1a"/><polygon points="2.9,0 7.1,0 10,2.9 10,5 0,5 0,2.9" fill="#e03a3a"/><path d="M3.3 3.3 L6.7 6.7 M6.7 3.3 L3.3 6.7" stroke="#f4f4f4" stroke-width="1.3"/></svg>
<svg style="position:absolute;left:4px;top:580px" width="17" height="17" viewBox="0 0 17 17"><polygon points="5.8,1 12.1,1 14.7,6 12.1,11.1 5.8,11.1 3.2,6" fill="#050505"/><path d="M5.8,1 L12.1,1 L14.7,6 L11.9,7.6 L10.4,4.8 L8.4,8.2 L5.5,3.8 L3.3,5.3 L3.2,6 Z" fill="#1b57a3"/><path d="M3.0 5.6 L5.5 3.9 L8.4 8.3 L10.4 4.9 L11.9 7.7 L14.6 5.6" stroke="#fff" stroke-width="1.3" fill="none" stroke-linejoin="miter"/><path d="M1.2 15 L2.6 12.8 M3 13.9 L16.4 13.9" stroke="#666" stroke-width="1.1" fill="none"/></svg>
<div style="position:absolute;left:9px;top:607.50px;font-size:13px;line-height:20px;font-weight:normal;color:#1e1e1e;white-space:nowrap;">OperationMode</div>
<div style="position:absolute;left:10px;top:629px;width:706px;height:81px;background:#ebebeb;box-sizing:border-box;border:1px solid #d5d5d5;border-radius:2px;"></div>
<div style="position:absolute;left:21px;top:640px;width:224px;height:58px;background:#ffa500;"></div>
<div style="position:absolute;left:21px;top:659.50px;width:224px;text-align:center;font-size:13px;line-height:20px;font-weight:normal;color:#111;white-space:nowrap;">STOP</div>
<div style="position:absolute;left:251px;top:640px;width:223px;height:26px;background:linear-gradient(#fcfcfc,#efefef);border:1px solid #a9a9a9;border-radius:3px;box-sizing:border-box;"></div>
<div style="position:absolute;left:251px;top:643.50px;width:223px;text-align:center;font-size:13px;line-height:20px;font-weight:normal;color:#1e1e1e;white-space:nowrap;">AUTO</div>
<div style="position:absolute;left:251px;top:672px;width:223px;height:26px;background:linear-gradient(#fcfcfc,#efefef);border:1px solid #a9a9a9;border-radius:3px;box-sizing:border-box;"></div>
<div style="position:absolute;left:251px;top:675.50px;width:223px;text-align:center;font-size:13px;line-height:20px;font-weight:normal;color:#1e1e1e;white-space:nowrap;">LOCAL</div>
<div style="position:absolute;left:480px;top:640px;width:224px;height:26px;background:#dcdcdc;border:1px solid #c9c9c9;border-radius:3px;box-sizing:border-box;"></div>
<div style="position:absolute;left:480px;top:643.50px;width:224px;text-align:center;font-size:13px;line-height:20px;font-weight:normal;color:#a9a9a9;white-space:nowrap;">STOP</div>
<div style="position:absolute;left:480px;top:672px;width:224px;height:26px;background:linear-gradient(#fcfcfc,#efefef);border:1px solid #a9a9a9;border-radius:3px;box-sizing:border-box;"></div>
<div style="position:absolute;left:480px;top:675.50px;width:224px;text-align:center;font-size:13px;line-height:20px;font-weight:normal;color:#1e1e1e;white-space:nowrap;">REMOTE</div>
<div style="position:absolute;left:9px;top:716.50px;font-size:13px;line-height:20px;font-weight:normal;color:#1e1e1e;white-space:nowrap;">AutowareControl</div>
<div style="position:absolute;left:10px;top:738px;width:706px;height:49px;background:#ebebeb;box-sizing:border-box;border:1px solid #d5d5d5;border-radius:2px;"></div>
<div style="position:absolute;left:21px;top:749px;width:224px;height:26px;background:#00ff00;"></div>
<div style="position:absolute;left:21px;top:752.50px;width:224px;text-align:center;font-size:13px;line-height:20px;font-weight:normal;color:#111;white-space:nowrap;">Enable</div>
<div style="position:absolute;left:251px;top:749px;width:223px;height:26px;background:#dcdcdc;border:1px solid #c9c9c9;border-radius:3px;box-sizing:border-box;"></div>
<div style="position:absolute;left:251px;top:752.50px;width:223px;text-align:center;font-size:13px;line-height:20px;font-weight:normal;color:#a9a9a9;white-space:nowrap;">Enable</div>
<div style="position:absolute;left:480px;top:749px;width:224px;height:26px;background:linear-gradient(#fcfcfc,#efefef);border:1px solid #a9a9a9;border-radius:3px;box-sizing:border-box;"></div>
<div style="position:absolute;left:480px;top:752.50px;width:224px;text-align:center;font-size:13px;line-height:20px;font-weight:normal;color:#1e1e1e;white-space:nowrap;">Disable</div>
<svg style="position:absolute;left:736px;top:474px" width="6" height="9"><polygon points="5,0.5 0.5,4.5 5,8.5" fill="#3a3a3a"/></svg>
<div style="position:absolute;left:728px;top:472px;width:1px;height:1px;background:#b0b0b0;"></div>
<div style="position:absolute;left:728px;top:475px;width:1px;height:1px;background:#b0b0b0;"></div>
<div style="position:absolute;left:728px;top:478px;width:1px;height:1px;background:#b0b0b0;"></div>
<div style="position:absolute;left:728px;top:481px;width:1px;height:1px;background:#b0b0b0;"></div>
<div style="position:absolute;left:728px;top:484px;width:1px;height:1px;background:#b0b0b0;"></div>
<div style="position:absolute;left:728px;top:487px;width:1px;height:1px;background:#b0b0b0;"></div>
<div style="position:absolute;left:755px;top:11px;width:1117px;height:780px;background:#fff;"></div>
<div style="position:absolute;left:756px;top:12px;width:1116px;height:779px;background:#000;"></div>
<div style="position:absolute;left:757px;top:13px;width:1115px;height:778px;background:#0b0b0b;"></div>
<svg style="position:absolute;left:0;top:0" width="1872" height="791" viewBox="0 0 1872 791">
<defs><clipPath id="vc"><rect x="757" y="13" width="1115" height="778"/></clipPath></defs>
<g clip-path="url(#vc)" fill="none">
<circle cx="1362" cy="173" r="2.6" fill="#0d1f0d"/>
<circle cx="1373" cy="173" r="2.6" fill="#1f1f0d"/>
<circle cx="1384" cy="173" r="2.6" fill="#1f0d0d"/>
<circle cx="1626" cy="227" r="2.6" fill="#0d1f0d"/>
<circle cx="1626" cy="237.5" r="2.6" fill="#1f1f0d"/>
<circle cx="1626" cy="248" r="2.6" fill="#1f0d0d"/>
<circle cx="1181" cy="295" r="2.6" fill="#1f0d0d"/>
<circle cx="1181" cy="306.5" r="2.6" fill="#1f1f0d"/>
<circle cx="1181" cy="317" r="2.6" fill="#0d1f0d"/>
<defs><clipPath id="cg"><rect x="0" y="0" width="1872" height="507.5"/></clipPath><clipPath id="cr"><rect x="0" y="507.5" width="1872" height="300"/></clipPath></defs>
<path d="M862.0 235.5 L1117.6 234.0 L1125.3 234.0 L1132.9 234.1 L1140.4 234.3 L1147.8 234.5 L1155.2 234.6 L1162.4 234.7 L1169.6 234.9 L1176.7 235.2 L1183.6 235.5 L1190.5 235.9 L1197.4 236.4 L1204.1 236.9 L1210.7 237.5 L1217.3 238.2 L1223.7 239.0 L1230.1 239.9 L1236.4 240.9 L1242.6 241.9 L1248.7 243.0 L1254.7 244.2 L1260.7 245.5 L1266.5 246.9 L1272.3 248.4 L1277.9 250.0 L1283.5 251.7 L1289.0 253.5 L1294.4 255.3 L1299.8 257.3 L1305.0 259.4 L1310.1 261.6 L1315.2 263.9 L1320.2 266.3 L1325.0 268.9 L1329.8 271.5 L1334.5 274.3 L1339.1 277.1 L1343.6 280.1 L1348.1 283.2 L1352.4 286.5 L1356.6 289.8 L1360.7 293.3 L1364.8 296.9 L1368.7 300.7 L1372.6 304.6 L1376.3 308.6 L1380.0 312.7 L1383.5 317.0 L1386.9 321.4 L1390.1 326.0 L1393.2 330.8 L1396.2 335.6 L1399.2 340.6 L1402.0 345.8 L1404.7 351.0 L1407.3 356.4 L1409.8 361.9 L1412.2 367.6 L1414.5 373.4 L1416.6 379.3 L1418.7 385.4 L1420.7 391.6 L1422.6 398.0 L1424.3 404.5 L1426.0 411.2 L1427.5 418.0 L1429.0 424.9 L1430.3 432.0 L1431.5 439.3 L1432.7 446.7 L1433.7 454.3 L1434.6 462.0 L1435.4 469.9 L1436.1 477.9 L1436.7 486.1 L1437.2 494.5 L1437.7 503.0 L1438.0 511.7 L1438.3 520.5 L1438.4 529.6 L1438.5 538.7 L1438.5 544.0 L1438.7 549.0 L1438.9 554.0 L1439.2 558.8 L1439.6 563.5 L1440.1 568.1 L1440.6 572.6 L1441.3 576.9 L1442.0 581.1 L1442.8 585.2 L1443.7 589.2 L1444.7 593.1 L1445.7 596.9 L1446.8 600.6 L1448.0 604.2 L1449.3 607.6 L1450.7 611.0 L1452.1 614.3 L1453.6 617.4 L1455.2 620.5 L1456.8 623.5 L1458.5 626.4 L1460.3 629.2 L1462.2 631.9 L1464.1 634.5 L1466.2 637.0 L1468.2 639.5 L1470.4 641.8 L1472.6 644.1 L1474.9 646.4 L1477.2 648.5 L1479.7 650.6 L1482.2 652.6 L1484.7 654.5 L1487.4 656.4 L1490.1 658.1 L1492.9 659.9 L1495.7 661.5 L1498.6 663.1 L1501.6 664.6 L1504.6 666.1 L1507.7 667.5 L1510.9 668.9 L1514.1 670.1 L1517.4 671.4 L1520.8 672.6 L1524.2 673.7 L1527.7 674.7 L1531.3 675.8 L1534.9 676.7 L1538.5 677.6 L1542.3 678.5 L1546.1 679.3 L1549.9 680.1 L1553.8 680.8 L1557.7 681.5 L1561.8 682.2 L1565.8 682.8 L1569.9 683.3 L1574.1 683.9 L1578.3 684.3 L1582.6 684.8 L1586.9 685.2 L1591.2 685.6 L1595.7 686.0 L1600.1 686.3 L1604.6 686.6 L1609.2 686.9 L1613.8 687.1 L1618.4 687.4 L1623.1 687.6 L1627.8 687.7 L1632.6 687.9 L1637.4 688.0 L1642.2 688.2 L1647.1 688.3 L1652.0 688.4 L1657.0 688.5 L1662.0 688.5 L1667.0 688.6 L1900.0 693.6" stroke="#088008" stroke-width="41" clip-path="url(#cg)"/>
<path d="M862.0 235.5 L1117.6 234.0 L1125.3 234.0 L1132.9 234.1 L1140.4 234.3 L1147.8 234.5 L1155.2 234.6 L1162.4 234.7 L1169.6 234.9 L1176.7 235.2 L1183.6 235.5 L1190.5 235.9 L1197.4 236.4 L1204.1 236.9 L1210.7 237.5 L1217.3 238.2 L1223.7 239.0 L1230.1 239.9 L1236.4 240.9 L1242.6 241.9 L1248.7 243.0 L1254.7 244.2 L1260.7 245.5 L1266.5 246.9 L1272.3 248.4 L1277.9 250.0 L1283.5 251.7 L1289.0 253.5 L1294.4 255.3 L1299.8 257.3 L1305.0 259.4 L1310.1 261.6 L1315.2 263.9 L1320.2 266.3 L1325.0 268.9 L1329.8 271.5 L1334.5 274.3 L1339.1 277.1 L1343.6 280.1 L1348.1 283.2 L1352.4 286.5 L1356.6 289.8 L1360.7 293.3 L1364.8 296.9 L1368.7 300.7 L1372.6 304.6 L1376.3 308.6 L1380.0 312.7 L1383.5 317.0 L1386.9 321.4 L1390.1 326.0 L1393.2 330.8 L1396.2 335.6 L1399.2 340.6 L1402.0 345.8 L1404.7 351.0 L1407.3 356.4 L1409.8 361.9 L1412.2 367.6 L1414.5 373.4 L1416.6 379.3 L1418.7 385.4 L1420.7 391.6 L1422.6 398.0 L1424.3 404.5 L1426.0 411.2 L1427.5 418.0 L1429.0 424.9 L1430.3 432.0 L1431.5 439.3 L1432.7 446.7 L1433.7 454.3 L1434.6 462.0 L1435.4 469.9 L1436.1 477.9 L1436.7 486.1 L1437.2 494.5 L1437.7 503.0 L1438.0 511.7 L1438.3 520.5 L1438.4 529.6 L1438.5 538.7 L1438.5 544.0 L1438.7 549.0 L1438.9 554.0 L1439.2 558.8 L1439.6 563.5 L1440.1 568.1 L1440.6 572.6 L1441.3 576.9 L1442.0 581.1 L1442.8 585.2 L1443.7 589.2 L1444.7 593.1 L1445.7 596.9 L1446.8 600.6 L1448.0 604.2 L1449.3 607.6 L1450.7 611.0 L1452.1 614.3 L1453.6 617.4 L1455.2 620.5 L1456.8 623.5 L1458.5 626.4 L1460.3 629.2 L1462.2 631.9 L1464.1 634.5 L1466.2 637.0 L1468.2 639.5 L1470.4 641.8 L1472.6 644.1 L1474.9 646.4 L1477.2 648.5 L1479.7 650.6 L1482.2 652.6 L1484.7 654.5 L1487.4 656.4 L1490.1 658.1 L1492.9 659.9 L1495.7 661.5 L1498.6 663.1 L1501.6 664.6 L1504.6 666.1 L1507.7 667.5 L1510.9 668.9 L1514.1 670.1 L1517.4 671.4 L1520.8 672.6 L1524.2 673.7 L1527.7 674.7 L1531.3 675.8 L1534.9 676.7 L1538.5 677.6 L1542.3 678.5 L1546.1 679.3 L1549.9 680.1 L1553.8 680.8 L1557.7 681.5 L1561.8 682.2 L1565.8 682.8 L1569.9 683.3 L1574.1 683.9 L1578.3 684.3 L1582.6 684.8 L1586.9 685.2 L1591.2 685.6 L1595.7 686.0 L1600.1 686.3 L1604.6 686.6 L1609.2 686.9 L1613.8 687.1 L1618.4 687.4 L1623.1 687.6 L1627.8 687.7 L1632.6 687.9 L1637.4 688.0 L1642.2 688.2 L1647.1 688.3 L1652.0 688.4 L1657.0 688.5 L1662.0 688.5 L1667.0 688.6 L1900.0 693.6" stroke="#800000" stroke-width="41" clip-path="url(#cr)"/>
<path d="M886.3 210.1 L1016.1 208.7 L1016.7 259.7 L886.9 261.1Z M913.1 209.8 L1042.9 208.4 L1043.4 259.3 L913.6 260.8Z M939.8 209.5 L1069.6 208.0 L1070.2 259.0 L940.4 260.5Z M966.6 209.2 L1096.3 207.7 L1096.9 258.7 L967.1 260.2Z M993.3 208.9 L1123.1 207.4 L1123.7 258.4 L993.9 259.9Z M1020.1 208.6 L1149.8 207.1 L1150.4 258.1 L1020.6 259.6Z M1046.8 208.3 L1176.6 206.8 L1177.2 257.8 L1047.4 259.3Z M1073.5 208.0 L1203.3 206.5 L1203.9 257.5 L1074.1 259.0Z M1100.9 207.3 L1230.7 208.7 L1230.1 259.7 L1100.3 258.3Z M1128.5 207.0 L1258.2 212.9 L1255.9 263.8 L1126.2 257.9Z M1156.0 207.8 L1285.5 217.6 L1281.6 268.4 L1152.2 258.6Z M1184.0 209.3 L1312.8 225.1 L1306.6 275.7 L1177.7 259.9Z M1212.5 211.7 L1339.9 236.6 L1330.1 286.6 L1202.7 261.7Z M1240.7 216.0 L1366.1 249.5 L1353.0 298.8 L1227.6 265.3Z M1269.6 221.9 L1391.0 267.8 L1373.0 315.5 L1251.6 269.7Z M1297.4 230.9 L1414.1 287.7 L1391.8 333.6 L1275.1 276.8Z M1325.2 242.6 L1433.7 313.9 L1405.7 356.5 L1297.2 285.2Z M1351.7 257.9 L1449.1 343.6 L1415.5 381.9 L1318.0 296.2Z M1375.8 276.8 L1459.9 375.7 L1421.1 408.7 L1337.0 309.8Z M1396.9 298.9 L1466.2 408.7 L1423.1 435.9 L1353.8 326.2Z M1414.5 323.6 L1468.9 441.5 L1422.5 462.8 L1368.2 344.9Z M1428.0 349.6 L1470.8 472.1 L1422.7 489.0 L1379.8 366.5Z M1438.5 376.6 L1470.8 502.3 L1421.4 515.0 L1389.1 389.3Z M1446.6 404.2 L1469.4 532.0 L1419.2 540.9 L1396.4 413.2Z M1452.6 432.0 L1467.0 561.0 L1416.3 566.7 L1401.9 437.7Z M1456.4 459.7 L1465.2 589.1 L1414.3 592.6 L1405.5 463.1Z M1458.8 487.3 L1462.6 617.0 L1411.7 618.5 L1407.9 488.8Z M1459.3 514.1 L1462.7 643.9 L1411.7 645.2 L1408.3 515.5Z M1458.0 538.5 L1474.4 667.2 L1423.9 673.7 L1407.4 544.9Z M1458.3 561.8 L1493.5 686.8 L1444.4 700.6 L1409.2 575.6Z M1460.7 584.0 L1520.8 699.0 L1475.5 722.6 L1415.4 607.6Z M1465.9 604.6 L1554.1 699.9 L1516.6 734.6 L1428.5 639.2Z M1476.8 623.1 L1586.0 693.3 L1558.5 736.2 L1449.3 666.0Z M1493.4 637.9 L1614.6 684.2 L1596.5 731.8 L1475.2 685.6Z M1514.5 648.3 L1640.9 677.9 L1629.3 727.5 L1502.9 698.0Z M1537.9 655.3 L1666.6 672.5 L1659.8 723.1 L1531.2 705.9Z M1562.9 659.6 L1692.3 669.3 L1688.5 720.1 L1559.1 710.4Z M1588.5 662.1 L1718.3 666.6 L1716.5 717.6 L1586.8 713.0Z M1614.6 663.3 L1744.4 664.7 L1743.9 715.7 L1614.1 714.3Z M1641.4 663.5 L1771.2 664.8 L1770.7 715.8 L1640.9 714.5Z M1668.1 663.8 L1797.9 665.1 L1797.4 716.1 L1667.6 714.8Z M1694.9 664.0 L1824.7 665.3 L1824.2 716.3 L1694.4 715.0Z M1721.6 664.3 L1851.4 665.6 L1850.9 716.6 L1721.1 715.3Z M1748.4 664.6 L1878.2 665.9 L1877.7 716.9 L1747.9 715.6Z M1775.1 664.8 L1904.9 666.1 L1904.4 717.1 L1774.6 715.8Z M1801.9 665.1 L1931.7 666.4 L1931.1 717.4 L1801.4 716.1Z M1828.6 665.4 L1958.4 666.7 L1957.9 717.7 L1828.1 716.4Z M1855.4 665.6 L1985.2 667.0 L1984.6 718.0 L1854.9 716.6Z" stroke="#00ffff" stroke-width="1"/>
<defs><linearGradient id="gr" gradientUnits="userSpaceOnUse" x1="0" y1="499.6" x2="0" y2="507.8"><stop offset="0" stop-color="#00ff00"/><stop offset="1" stop-color="#ff0000"/></linearGradient></defs>
<path d="M916.0 235.3 L1117.6 233.0 L1125.3 233.0 L1132.9 233.1 L1140.4 233.3 L1147.9 233.5 L1155.2 233.7 L1162.5 234.1 L1169.6 234.4 L1176.7 234.9 L1183.7 235.4 L1190.5 236.0 L1197.3 236.7 L1204.0 237.4 L1210.6 238.2 L1217.1 239.1 L1223.6 240.1 L1229.9 241.1 L1236.1 242.3 L1242.3 243.5 L1248.3 244.7 L1254.3 246.1 L1260.1 247.6 L1265.9 249.1 L1271.6 250.7 L1277.2 252.5 L1282.6 254.3 L1288.0 256.2 L1293.3 258.2 L1298.5 260.3 L1303.6 262.5 L1308.7 264.8 L1313.6 267.2 L1318.4 269.6 L1323.1 272.2 L1327.8 274.9 L1332.3 277.8 L1336.7 280.7 L1341.1 283.7 L1345.3 286.8 L1349.5 290.1 L1353.5 293.5 L1357.5 296.9 L1361.3 300.5 L1365.1 304.2 L1368.8 308.1 L1372.3 312.0 L1375.8 316.1 L1379.2 320.3 L1382.5 324.7 L1385.6 329.1 L1388.7 333.7 L1391.7 338.4 L1394.6 343.3 L1397.3 348.3 L1400.0 353.4 L1402.6 358.6 L1405.1 364.0 L1407.5 369.6 L1409.8 375.2 L1412.0 381.0 L1414.0 387.0 L1416.0 393.1 L1417.9 399.4 L1419.7 405.8 L1421.4 412.3 L1423.0 419.0 L1424.4 425.9 L1425.8 432.9 L1427.1 440.0 L1428.3 447.4 L1429.4 454.9 L1430.3 462.5 L1431.2 470.3 L1432.0 478.3 L1432.6 486.4 L1433.2 494.7 L1433.5 499.6" stroke="#00ff00" stroke-width="11"/>
<path d="M1433.5 499.6 L1433.7 503.2 L1433.9 507.8" stroke="url(#gr)" stroke-width="11"/>
<path d="M1433.9 507.8 L1434.0 511.8 L1434.3 520.6 L1434.4 529.6 L1434.5 538.8 L1434.5 544.0 L1434.7 549.2 L1434.9 554.2 L1435.2 559.1 L1435.6 563.9 L1436.1 568.5 L1436.7 573.1 L1437.4 577.5 L1438.1 581.9 L1439.0 586.1 L1439.9 590.2 L1440.9 594.1 L1442.0 598.0 L1443.2 601.8 L1444.4 605.5 L1445.8 609.0 L1447.2 612.5 L1448.7 615.8 L1450.2 619.1 L1451.9 622.3 L1453.6 625.3 L1455.4 628.3 L1457.3 631.2 L1459.3 634.0 L1461.3 636.7 L1463.4 639.3 L1465.6 641.8 L1467.9 644.3 L1470.2 646.6 L1472.6 648.9 L1475.0 651.1 L1477.6 653.2 L1480.2 655.2 L1482.9 657.2 L1485.6 659.0 L1488.4 660.8 L1491.3 662.6 L1494.2 664.2 L1497.2 665.8 L1500.3 667.3 L1503.4 668.8 L1506.6 670.2 L1509.8 671.5 L1513.2 672.8 L1516.5 674.0 L1520.0 675.1 L1523.5 676.2 L1527.0 677.2 L1530.6 678.2 L1534.3 679.1 L1538.0 680.0 L1541.8 680.8 L1545.6 681.6 L1549.5 682.3 L1553.4 683.0 L1557.4 683.6 L1561.5 684.2 L1565.6 684.8 L1569.7 685.3 L1573.9 685.7 L1578.1 686.2 L1582.4 686.6 L1586.8 686.9 L1591.1 687.3 L1595.6 687.6 L1600.0 687.8 L1604.6 688.1 L1609.1 688.3 L1613.7 688.5 L1618.4 688.6 L1623.1 688.8 L1627.8 688.9 L1632.6 689.0 L1637.4 689.1 L1642.2 689.1 L1647.1 689.2 L1652.0 689.2 L1657.0 689.2 L1662.0 689.2 L1667.0 689.2 L1900.0 691.6" stroke="#ff0000" stroke-width="11"/>
<g><path d="M1066 205.8 L1160 205.8 Q1178 207 1178 231 Q1178 255 1160 256.5 L1066 256.5 Q1050.5 255 1050.5 231 Q1050.5 207 1066 205.8 Z" fill="rgba(220,232,220,0.44)" stroke="rgba(175,175,175,0.85)" stroke-width="1.3"/><path d="M1056 222 Q1058 214 1066 213 L1066 249 Q1058 248 1056 240 Z" fill="rgba(30,45,30,0.35)"/><path d="M1120 214 L1146 212 Q1152 231 1146 250 L1120 248 Q1116 231 1120 214 Z" fill="rgba(30,45,30,0.38)"/><rect x="1072" y="207" width="80" height="7" fill="rgba(20,20,20,0.30)"/><rect x="1072" y="248" width="80" height="7" fill="rgba(20,20,20,0.30)"/><path d="M1068 213 Q1100 210 1148 212" stroke="rgba(220,220,220,0.35)" stroke-width="1" fill="none"/><path d="M1068 249 Q1100 252 1148 250" stroke="rgba(220,220,220,0.35)" stroke-width="1" fill="none"/></g>
<path d="M757 196 L1200 195.8 L1872 195" stroke="#858585" stroke-width="2.4"/>
<path d="M757 274.5 L1190 274 L1872 273.8" stroke="#858585" stroke-width="2.4"/>
<path d="M757 353 L1872 352.6" stroke="#858585" stroke-width="2.4"/>
<path d="M1320 465 L1320 791" stroke="#858585" stroke-width="2.4"/>
<path d="M1399.4 470 L1399.4 791" stroke="#858585" stroke-width="2.4"/>
<path d="M1477.3 465 L1477.3 791" stroke="#858585" stroke-width="2.4"/>
<path d="M1191 353 C1280 362 1320 400 1320 470" stroke="#858585" stroke-width="2.4"/>
<path d="M1622 195 C1455 195 1322 332 1320 480" stroke="#858585" stroke-width="2.4"/>
<path d="M1629 274 C1510 274 1402 362 1399 480" stroke="#858585" stroke-width="2.4"/>
<path d="M1592 353 C1530 358 1477 410 1477 475" stroke="#858585" stroke-width="2.4"/>
<path d="M1326 791 C1326 700 1440 640 1530 637 L1872 641" stroke="#858585" stroke-width="2.4"/>
<path d="M1403 791 C1406 765 1440 745 1520 741 L1872 745" stroke="#858585" stroke-width="2.4"/>
<path d="M1740 640 C1790 645 1830 660 1872 684" stroke="#858585" stroke-width="2.4"/>
<path d="M1745 745 C1800 752 1840 770 1860 791" stroke="#858585" stroke-width="2.4"/>
<path d="M797 196 L1200.1 195.8 C1357.6 195.8 1476 312.3 1476 478.6 L1479 585 L1488 600 L1510.8 622.8 L1536.6 632.6 L1567 636.4 L1872 641" stroke="#0895d6" stroke-width="8" stroke-linejoin="round"/>
<path d="M797 196 L1200.1 195.8 C1357.6 195.8 1476 312.3 1476 478.6 L1479 585 L1488 600 L1510.8 622.8 L1536.6 632.6 L1567 636.4 L1872 641" stroke="#858585" stroke-width="3" stroke-linejoin="round"/>
<path d="M797 275 L1186.7 274 C1322.6 274 1399.2 369.7 1399.2 479.4 L1398.8 505 L1402 600 L1409 660.7 L1422.8 700 L1444 718.4 L1481 732 L1520 737 L1872 745" stroke="#0895d6" stroke-width="8" stroke-linejoin="round"/>
<path d="M797 275 L1186.7 274 C1322.6 274 1399.2 369.7 1399.2 479.4 L1398.8 505 L1402 600 L1409 660.7 L1422.8 700 L1444 718.4 L1481 732 L1520 737 L1872 745" stroke="#858585" stroke-width="3" stroke-linejoin="round"/>
<rect x="1179" y="199" width="13" height="75" fill="#808080"/>
<rect x="1324" y="481" width="74" height="13" fill="#808080"/>
<polygon points="1630,274 1642,274 1644,353 1632,353" fill="#808080"/>
<polygon points="1410.9,226.4 1436.3,234.1 1410.9,241.8" fill="rgba(192,192,192,0.35)"/>
<polygon points="1523,226.4 1549,234.1 1523,241.8" fill="rgba(192,192,192,0.35)"/>
<polygon points="1532.2,242.7 1559,246.3 1534,258.1" fill="rgba(192,192,231,0.35)"/>
<polygon points="1272.5,313.5 1298.5,305.5 1298.5,321" fill="rgba(192,192,192,0.35)"/>
<polygon points="1250.4,327.3 1277.9,325.2 1274,340.9" fill="rgba(174,208,208,0.35)"/>
<polygon points="1440.1,296.3 1466.5,289.5 1448,309.2" fill="rgba(192,192,231,0.35)"/>
<polygon points="1498.4,312.5 1524.2,305.6 1524.2,321" fill="rgba(192,192,192,0.35)"/>
<polygon points="1535.5,323.8 1545.5,335 1520.9,346.7" fill="rgba(174,208,208,0.35)"/>
<polygon points="1611.2,313.7 1630.8,308 1630.8,319.8" fill="rgba(192,220,220,0.35)"/>
<polygon points="1322.1,378.2 1346.4,391.1 1333.5,400.2" fill="rgba(174,208,208,0.35)"/>
<polygon points="1353.9,462 1364.5,480.6 1352.4,480.6" fill="rgba(174,208,208,0.35)"/>
<polygon points="1365.6,462 1366.8,480.6 1355,480.6" fill="rgba(192,192,231,0.35)"/>
<polygon points="1400.7,721.3 1427.8,717.8 1406.5,735.7" fill="rgba(192,192,231,0.35)"/>
<polygon points="1185,229.7 1211.5,236.2 1185,241.3" fill="rgba(192,192,192,0.35)"/>
<polygon points="1288.2,244.8 1281.4,257.3 1307.1,262.3" fill="rgba(192,192,192,0.35)"/>
<polygon points="1298.4,235 1312,240 1299,243" fill="rgba(192,192,231,0.35)"/>
<polygon points="1363,308 1370.7,301.6 1382.8,324.8" fill="rgba(192,192,192,0.35)"/>
<polygon points="1387,312 1411,306.5 1406,318.7" fill="rgba(192,192,192,0.35)"/>
<polygon points="1379,385 1395,369 1392,389" fill="rgba(192,192,231,0.35)"/>
<polygon points="1415,390 1429.6,385.4 1424,413.7" fill="rgba(192,192,192,0.35)"/>
<polygon points="1459,400 1473,393.6 1463,416.4" fill="rgba(192,192,192,0.35)"/>
<polygon points="1432,551 1447,553 1440,575" fill="rgba(192,192,192,0.35)"/>
<polygon points="1443,622 1465,630 1450,642" fill="rgba(192,192,192,0.35)"/>
<polygon points="1482,685 1508,692 1484,700" fill="rgba(192,192,231,0.35)"/>
<polygon points="1499,591 1567,598 1568,791 1499,791" fill="rgba(68,74,70,0.5)"/>
</g></svg>
</body></html>
